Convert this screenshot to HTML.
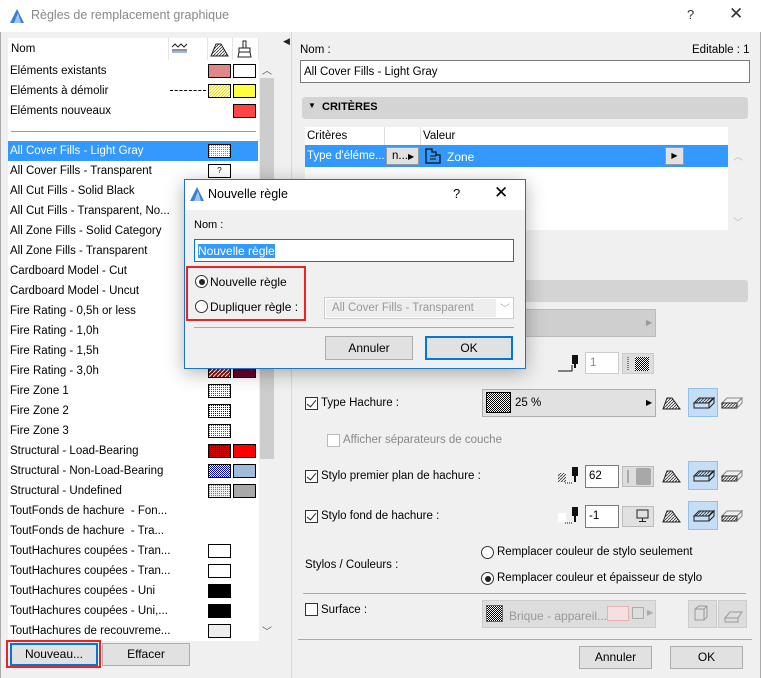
<!DOCTYPE html>
<html><head><meta charset="utf-8">
<style>
*{box-sizing:border-box;margin:0;padding:0}
body{width:761px;height:678px;overflow:hidden;background:#f0f0f0;font-family:"Liberation Sans",sans-serif;font-size:11.5px;color:#000;position:relative}
.a{position:absolute;white-space:nowrap}
.btn{position:absolute;background:#e1e1e1;border:1px solid #adadad;text-align:center;font-size:12px}
.sw{position:absolute;width:23px;height:14px;border:1px solid #000}
.row{position:absolute;left:10px;height:20px;line-height:20px}
.cb{position:absolute;width:13px;height:13px;border:1px solid #333;background:#fff}
.cb.c::after{content:"";position:absolute;left:3px;top:0px;width:4px;height:8px;border:solid #222;border-width:0 1.3px 1.3px 0;transform:rotate(40deg)}
.rad{position:absolute;width:13px;height:13px;border:1px solid #333;border-radius:50%;background:#fff}
.rad.c::after{content:"";position:absolute;left:2.5px;top:2.5px;width:6px;height:6px;border-radius:50%;background:#222}
.inp{position:absolute;background:#fff;border:1px solid #7a7a7a}
</style></head><body>
<svg width="0" height="0" style="position:absolute">
<defs>
<pattern id="dots" width="2" height="2" patternUnits="userSpaceOnUse"><rect width="2" height="2" fill="#fff"/><rect width="1" height="1" fill="#888"/></pattern>
<pattern id="dk" width="2" height="2" patternUnits="userSpaceOnUse"><rect width="2" height="2" fill="#fff"/><rect width="1" height="1" fill="#000"/><rect x="1" y="1" width="1" height="1" fill="#000"/></pattern>
<pattern id="yl" width="3" height="3" patternUnits="userSpaceOnUse"><rect width="3" height="3" fill="#ffffd0"/><path d="M0 3L3 0" stroke="#e0d000" stroke-width=".8"/></pattern>
<pattern id="rd" width="4" height="4" patternUnits="userSpaceOnUse"><rect width="4" height="4" fill="#8a1010"/><path d="M0 4L4 0" stroke="#fff" stroke-width="1"/></pattern>
<pattern id="rdot" width="2" height="2" patternUnits="userSpaceOnUse"><rect width="2" height="2" fill="#fff"/><rect width="1" height="1" fill="#e00"/></pattern>
<pattern id="bdot" width="2" height="2" patternUnits="userSpaceOnUse"><rect width="2" height="2" fill="#fff"/><rect width="1" height="1" fill="#00f"/></pattern>
<pattern id="gdot" width="2" height="2" patternUnits="userSpaceOnUse"><rect width="2" height="2" fill="#fff"/><rect width="1" height="1" fill="#080"/></pattern>
<pattern id="rdd" width="2" height="2" patternUnits="userSpaceOnUse"><rect width="2" height="2" fill="#c00"/><rect width="1" height="1" fill="#600"/></pattern>
<pattern id="bdd" width="2" height="2" patternUnits="userSpaceOnUse"><rect width="2" height="2" fill="#fff"/><rect width="1" height="1" fill="#00c"/><rect x="1" y="1" width="1" height="1" fill="#00c"/></pattern>
<pattern id="gy" width="2" height="2" patternUnits="userSpaceOnUse"><rect width="2" height="2" fill="#eee"/><rect width="1" height="1" fill="#777"/></pattern>
<pattern id="hat" width="3" height="3" patternUnits="userSpaceOnUse"><path d="M0 3L3 0" stroke="#333" stroke-width=".8"/></pattern>
</defs></svg>

<!-- title bar -->
<div class="a" style="left:0;top:0;width:761px;height:32px;background:#fff"></div>
<svg class="a" style="left:9px;top:8px" width="16" height="16"><path d="M1 15L8 1L15 15Z" fill="#3b7fd8"/><path d="M5 15L9 5L12 15Z" fill="#9cc7f5"/></svg>
<div class="a" style="left:31px;top:8px;font-size:12.5px;color:#888">Règles de remplacement graphique</div>
<div class="a" style="left:687px;top:7px;font-size:13px;color:#333">?</div>
<div class="a" style="left:729px;top:4px;font-size:17px;color:#333">✕</div>
<div class="a" style="left:0;top:32px;width:1px;height:646px;background:#aaa"></div>
<div class="a" style="left:760px;top:32px;width:1px;height:646px;background:#aaa"></div>

<!-- left list -->
<div class="a" style="left:8px;top:38px;width:251px;height:603px;background:#fff"></div>
<div class="a" style="left:168px;top:38px;width:1px;height:22px;background:#e5e5e5"></div>
<div class="a" style="left:207px;top:38px;width:1px;height:22px;background:#e5e5e5"></div>
<div class="a" style="left:232px;top:38px;width:1px;height:22px;background:#e5e5e5"></div>
<div class="a" style="left:258px;top:38px;width:1px;height:22px;background:#e5e5e5"></div>
<div class="a" style="left:11px;top:43px">Nom</div>
<svg class="a" style="left:171px;top:42px" width="18" height="12"><path d="M1 5L4 2L7 5L10 2L13 5L16 2" stroke="#222" fill="none"/><path d="M1 8H16" stroke="#222"/><path d="M1 10H16" stroke="#3a6fd0"/></svg>
<svg class="a" style="left:210px;top:41px" width="20" height="16"><path d="M1 15L6 3H11L18 15Z" fill="url(#hat)" stroke="#222"/></svg>
<svg class="a" style="left:235px;top:40px" width="20" height="18"><rect x="8" y="1" width="3" height="7" fill="none" stroke="#222"/><path d="M4 8H15V12H4Z M4 12L3 17H16L15 12" fill="none" stroke="#222"/></svg>

<div class="row" style="top:61px">Eléments existants</div>
<div class="sw" style="left:208px;top:64px;background:#e08888"></div><div class="sw" style="left:233px;top:64px;background:#fff"></div>
<div class="row" style="top:81px">Eléments à démolir</div>
<div class="a" style="left:170px;top:90px;width:36px;border-top:1px dashed #000"></div>
<div class="sw" style="left:208px;top:84px"><svg width="21" height="12"><rect width="21" height="12" fill="url(#yl)"/></svg></div><div class="sw" style="left:233px;top:84px;background:#ffff40"></div>
<div class="row" style="top:101px">Eléments nouveaux</div>
<div class="sw" style="left:233px;top:104px;background:#f44"></div>
<div class="a" style="left:11px;top:131px;width:245px;height:1px;background:#999"></div>

<div class="a" style="left:8px;top:141px;width:250px;height:20px;background:#3399ff"></div>
<div class="row" style="top:141px;color:#fff">All Cover Fills - Light Gray</div>
<div class="sw" style="left:208px;top:144px"><svg width="21" height="12"><rect width="21" height="12" fill="url(#dots)"/></svg></div>
<div class="row" style="top:161px">All Cover Fills - Transparent</div>
<div class="sw" style="left:208px;top:164px;background:#fff;font-size:8px;text-align:center;line-height:12px">?</div>
<div class="row" style="top:181px">All Cut Fills - Solid Black</div>
<div class="row" style="top:201px">All Cut Fills - Transparent, No...</div>
<div class="row" style="top:221px">All Zone Fills - Solid Category</div>
<div class="row" style="top:241px">All Zone Fills - Transparent</div>
<div class="row" style="top:261px">Cardboard Model - Cut</div>
<div class="row" style="top:281px">Cardboard Model - Uncut</div>
<div class="row" style="top:301px">Fire Rating - 0,5h or less</div>
<div class="row" style="top:321px">Fire Rating - 1,0h</div>
<div class="row" style="top:341px">Fire Rating - 1,5h</div>
<div class="row" style="top:361px">Fire Rating - 3,0h</div>
<div class="sw" style="left:208px;top:364px"><svg width="21" height="12"><rect width="21" height="12" fill="url(#rd)"/></svg></div><div class="sw" style="left:233px;top:364px;background:#6a0030"></div>
<div class="row" style="top:381px">Fire Zone 1</div>
<div class="sw" style="left:208px;top:384px"><svg width="21" height="12"><rect width="21" height="12" fill="url(#rdot)"/></svg></div>
<div class="row" style="top:401px">Fire Zone 2</div>
<div class="sw" style="left:208px;top:404px"><svg width="21" height="12"><rect width="21" height="12" fill="url(#bdot)"/></svg></div>
<div class="row" style="top:421px">Fire Zone 3</div>
<div class="sw" style="left:208px;top:424px"><svg width="21" height="12"><rect width="21" height="12" fill="url(#gdot)"/></svg></div>
<div class="row" style="top:441px">Structural - Load-Bearing</div>
<div class="sw" style="left:208px;top:444px"><svg width="21" height="12"><rect width="21" height="12" fill="url(#rdd)"/></svg></div><div class="sw" style="left:233px;top:444px;background:#f00"></div>
<div class="row" style="top:461px">Structural - Non-Load-Bearing</div>
<div class="sw" style="left:208px;top:464px"><svg width="21" height="12"><rect width="21" height="12" fill="url(#bdd)"/></svg></div><div class="sw" style="left:233px;top:464px;background:#a0bcdc"></div>
<div class="row" style="top:481px">Structural - Undefined</div>
<div class="sw" style="left:208px;top:484px"><svg width="21" height="12"><rect width="21" height="12" fill="url(#gy)"/></svg></div><div class="sw" style="left:233px;top:484px;background:#a8a8a8"></div>
<div class="row" style="top:501px">ToutFonds de hachure&nbsp; - Fon...</div>
<div class="row" style="top:521px">ToutFonds de hachure&nbsp; - Tra...</div>
<div class="row" style="top:541px">ToutHachures coupées - Tran...</div>
<div class="sw" style="left:208px;top:544px;background:#fff"></div>
<div class="row" style="top:561px">ToutHachures coupées - Tran...</div>
<div class="sw" style="left:208px;top:564px;background:#fff"></div>
<div class="row" style="top:581px">ToutHachures coupées - Uni</div>
<div class="sw" style="left:208px;top:584px;background:#000"></div>
<div class="row" style="top:601px">ToutHachures coupées - Uni,...</div>
<div class="sw" style="left:208px;top:604px;background:#000"></div>
<div class="row" style="top:621px">ToutHachures de recouvreme...</div>
<div class="sw" style="left:208px;top:624px;background:#eee"></div>

<!-- scrollbar -->
<div class="a" style="left:259px;top:60px;width:16px;height:581px;background:#f0f0f0"></div>
<div class="a" style="left:260px;top:78px;width:14px;height:381px;background:#cdcdcd"></div>
<div class="a" style="left:262px;top:62px;font-size:10px;color:#555">︿</div>
<div class="a" style="left:262px;top:623px;font-size:10px;color:#555">﹀</div>
<div class="a" style="left:283px;top:36px;font-size:9px;color:#222">◀</div>
<div class="a" style="left:291px;top:32px;width:1px;height:646px;background:#d8d8d8"></div>

<div class="a" style="left:6px;top:640px;width:95px;height:28px;border:2px solid #e22"></div>
<div class="btn" style="left:10px;top:643px;width:88px;height:23px;border:2px solid #0078d7;line-height:19px">Nouveau...</div>
<div class="btn" style="left:102px;top:643px;width:88px;height:23px;line-height:21px">Effacer</div>

<!-- right panel -->
<div class="a" style="left:300px;top:44px">Nom :</div>
<div class="a" style="left:692px;top:44px">Editable : 1</div>
<div class="inp" style="left:300px;top:60px;width:450px;height:23px"></div>
<div class="a" style="left:304px;top:66px">All Cover Fills - Light Gray</div>
<div class="a" style="left:302px;top:97px;width:446px;height:22px;background:#d4d4d4;border-radius:3px"></div>
<div class="a" style="left:308px;top:101px;font-size:8px">▼</div>
<div class="a" style="left:322px;top:101px;font-weight:bold;font-size:11px">CRITÈRES</div>
<div class="a" style="left:305px;top:127px;width:423px;height:103px;background:#fff"></div>
<div class="a" style="left:384px;top:127px;width:1px;height:18px;background:#ddd"></div>
<div class="a" style="left:420px;top:127px;width:1px;height:18px;background:#ddd"></div>
<div class="a" style="left:307px;top:130px">Critères</div>
<div class="a" style="left:423px;top:130px">Valeur</div>
<div class="a" style="left:305px;top:145px;width:423px;height:22px;background:#3399ff"></div>
<div class="a" style="left:307px;top:150px;color:#fff">Type d'éléme...</div>
<div class="a" style="left:386px;top:147px;width:33px;height:18px;background:#e1e1e1;border:1px solid #999;padding-left:5px;line-height:16px">n...<span style="font-size:8px">▶</span></div>
<svg class="a" style="left:424px;top:147px" width="18" height="18"><path d="M2 2H8V5H12V8H16V16H2Z" fill="none" stroke="#111" stroke-width="1.3"/><path d="M6 9H12M6 12H12" stroke="#111"/></svg>
<div class="a" style="left:447px;top:150px;color:#fff;font-size:12px">Zone</div>
<div class="a" style="left:665px;top:147px;width:19px;height:18px;background:#e1e1e1;border:1px solid #999;font-size:8px;text-align:center;line-height:16px">▶</div>
<div class="a" style="left:733px;top:148px;font-size:10px;color:#bbb">︿</div>
<div class="a" style="left:733px;top:214px;font-size:10px;color:#bbb">﹀</div>
<div class="a" style="left:302px;top:280px;width:446px;height:22px;background:#d4d4d4;border-radius:3px"></div>
<div class="a" style="left:482px;top:309px;width:174px;height:28px;background:#cfcfcf;border:1px solid #bbb"></div>
<div class="a" style="left:646px;top:318px;font-size:8px;color:#999">▶</div>

<!-- row with "1" -->
<svg class="a" style="left:558px;top:353px" width="24" height="20"><path d="M0 18H14V12" stroke="#111" fill="none"/><rect x="14" y="2" width="6" height="9" fill="#111"/><path d="M16 11V15H18V11" fill="#111"/></svg>
<div class="inp" style="left:585px;top:352px;width:34px;height:22px;border-color:#ccc"></div>
<div class="a" style="left:590px;top:357px;color:#888">1</div>
<div class="a" style="left:622px;top:353px;width:32px;height:21px;background:#ddd;border:1px solid #ccc"></div>
<svg class="a" style="left:626px;top:355px" width="26" height="18"><path d="M2 2V16" stroke="#222" stroke-dasharray="1 1"/><rect x="9" y="2" width="14" height="14" fill="url(#dk)"/></svg>

<!-- Type Hachure -->
<div class="cb c" style="left:305px;top:397px"></div>
<div class="a" style="left:321px;top:397px">Type Hachure :</div>
<div class="a" style="left:482px;top:389px;width:174px;height:28px;background:#e1e1e1;border:1px solid #adadad"></div>
<svg class="a" style="left:486px;top:392px" width="26" height="22"><rect x=".5" y=".5" width="24" height="20" fill="url(#dk)" stroke="#000"/></svg>
<div class="a" style="left:515px;top:397px">25 %</div>
<div class="a" style="left:646px;top:398px;font-size:8px">▶</div>

<!-- icon triplets -->
<svg class="a" style="left:662px;top:395px" width="20" height="16"><path d="M1 14L5 3H10L18 14Z" fill="url(#hat)" stroke="#222"/></svg>
<div class="a" style="left:688px;top:388px;width:30px;height:29px;background:#c5def5;border:1px solid #8ec1ee"></div>
<svg class="a" style="left:692px;top:395px" width="24" height="16"><path d="M2 8L7 3H22L17 8Z" fill="url(#hat)" stroke="#222"/><path d="M2 8H17V13H2Z M17 8L22 3V8L17 13" fill="none" stroke="#222"/></svg>
<svg class="a" style="left:720px;top:395px" width="24" height="16"><path d="M2 8L7 3H22L17 8Z" fill="none" stroke="#888"/><path d="M2 8H17V13H2Z" fill="url(#hat)" stroke="#222"/><path d="M17 8L22 3V8L17 13" fill="none" stroke="#888"/></svg>

<div class="cb" style="left:327px;top:434px;border-color:#bbb"></div>
<div class="a" style="left:343px;top:434px;color:#888">Afficher séparateurs de couche</div>

<!-- Stylo premier plan -->
<div class="cb c" style="left:305px;top:470px"></div>
<div class="a" style="left:321px;top:470px">Stylo premier plan de hachure :</div>
<svg class="a" style="left:557px;top:465px" width="26" height="22"><rect x="1" y="8" width="8" height="9" fill="url(#hat)"/><path d="M8 18H16" stroke="#111" stroke-dasharray="1 1"/><rect x="15" y="2" width="6" height="9" fill="#111"/><path d="M17 11V17H19V11" fill="#111"/></svg>
<div class="inp" style="left:585px;top:465px;width:34px;height:23px"></div>
<div class="a" style="left:589px;top:470px">62</div>
<div class="a" style="left:622px;top:466px;width:32px;height:21px;background:#ddd;border:1px solid #bbb"></div>
<div class="a" style="left:627px;top:470px;width:2px;height:13px;background:#aaa"></div>
<div class="a" style="left:636px;top:468px;width:15px;height:17px;background:#a8a8a8;border-radius:2px"></div>
<svg class="a" style="left:662px;top:468px" width="20" height="16"><path d="M1 14L5 3H10L18 14Z" fill="url(#hat)" stroke="#222"/></svg>
<div class="a" style="left:688px;top:461px;width:30px;height:29px;background:#c5def5;border:1px solid #8ec1ee"></div>
<svg class="a" style="left:692px;top:468px" width="24" height="16"><path d="M2 8L7 3H22L17 8Z" fill="url(#hat)" stroke="#222"/><path d="M2 8H17V13H2Z M17 8L22 3V8L17 13" fill="none" stroke="#222"/></svg>
<svg class="a" style="left:720px;top:468px" width="24" height="16"><path d="M2 8L7 3H22L17 8Z" fill="none" stroke="#888"/><path d="M2 8H17V13H2Z" fill="url(#hat)" stroke="#222"/><path d="M17 8L22 3V8L17 13" fill="none" stroke="#888"/></svg>

<!-- Stylo fond -->
<div class="cb c" style="left:305px;top:510px"></div>
<div class="a" style="left:321px;top:510px">Stylo fond de hachure :</div>
<svg class="a" style="left:557px;top:505px" width="26" height="22"><rect x="1" y="8" width="8" height="9" fill="#fff"/><path d="M8 18H16" stroke="#111" stroke-dasharray="1 1"/><rect x="15" y="2" width="6" height="9" fill="#111"/><path d="M17 11V17H19V11" fill="#111"/></svg>
<div class="inp" style="left:585px;top:505px;width:34px;height:23px"></div>
<div class="a" style="left:589px;top:510px">-1</div>
<div class="a" style="left:622px;top:506px;width:32px;height:21px;background:#e1e1e1;border:1px solid #bbb"></div>
<svg class="a" style="left:636px;top:509px" width="14" height="14"><rect x="1" y="1" width="11" height="8" fill="none" stroke="#222"/><path d="M6.5 9V12M3 12.5H10" stroke="#222"/></svg>
<svg class="a" style="left:662px;top:508px" width="20" height="16"><path d="M1 14L5 3H10L18 14Z" fill="url(#hat)" stroke="#222"/></svg>
<div class="a" style="left:688px;top:501px;width:30px;height:29px;background:#c5def5;border:1px solid #8ec1ee"></div>
<svg class="a" style="left:692px;top:508px" width="24" height="16"><path d="M2 8L7 3H22L17 8Z" fill="url(#hat)" stroke="#222"/><path d="M2 8H17V13H2Z M17 8L22 3V8L17 13" fill="none" stroke="#222"/></svg>
<svg class="a" style="left:720px;top:508px" width="24" height="16"><path d="M2 8L7 3H22L17 8Z" fill="none" stroke="#888"/><path d="M2 8H17V13H2Z" fill="url(#hat)" stroke="#222"/><path d="M17 8L22 3V8L17 13" fill="none" stroke="#888"/></svg>

<div class="a" style="left:305px;top:559px">Stylos / Couleurs :</div>
<div class="rad" style="left:481px;top:546px"></div>
<div class="a" style="left:497px;top:546px">Remplacer couleur de stylo seulement</div>
<div class="rad c" style="left:481px;top:572px"></div>
<div class="a" style="left:497px;top:572px">Remplacer couleur et épaisseur de stylo</div>
<div class="a" style="left:303px;top:593px;width:443px;height:1px;background:#aaa"></div>
<div class="cb" style="left:305px;top:603px"></div>
<div class="a" style="left:321px;top:604px">Surface :</div>
<div class="a" style="left:482px;top:600px;width:174px;height:28px;background:#ddd;border:1px solid #ccc"></div>
<svg class="a" style="left:486px;top:605px" width="18" height="18"><rect x=".5" y=".5" width="16" height="16" fill="url(#dk)" stroke="#666"/></svg>
<div class="a" style="left:509px;top:609px;color:#999;font-size:12px">Brique - appareil...</div>
<div class="a" style="left:607px;top:606px;width:22px;height:15px;background:#f4e0e0;border:1px solid #e8b0b0"></div>
<div class="a" style="left:632px;top:607px;width:12px;height:12px;border:1px solid #aaa"></div>
<div class="a" style="left:647px;top:608px;font-size:8px;color:#aaa">▶</div>
<div class="a" style="left:688px;top:600px;width:29px;height:28px;background:#ddd;border:1px solid #ccc"></div>
<div class="a" style="left:718px;top:600px;width:29px;height:28px;background:#ddd;border:1px solid #ccc"></div>
<svg class="a" style="left:692px;top:604px" width="22" height="20"><path d="M3 5L7 2H15V13L12 16H3Z M3 5H12V16 M12 5L15 2" fill="none" stroke="#999"/></svg>
<svg class="a" style="left:722px;top:606px" width="22" height="18"><path d="M3 12L8 6H20L16 12Z M3 12H16V16H3Z" fill="none" stroke="#999"/></svg>
<div class="a" style="left:298px;top:639px;width:454px;height:1px;background:#aaa"></div>
<div class="btn" style="left:579px;top:646px;width:73px;height:23px;line-height:21px">Annuler</div>
<div class="btn" style="left:670px;top:646px;width:73px;height:23px;line-height:21px">OK</div>

<!-- dialog -->
<div class="a" style="left:184px;top:179px;width:342px;height:190px;background:#f0f0f0;border:1px solid #1b74c9;box-shadow:0 4px 18px rgba(0,0,0,.3)"></div>
<div class="a" style="left:185px;top:180px;width:340px;height:30px;background:#fff"></div>
<svg class="a" style="left:189px;top:186px" width="16" height="16"><path d="M1 15L8 1L15 15Z" fill="#3b7fd8"/><path d="M5 15L9 5L12 15Z" fill="#9cc7f5"/></svg>
<div class="a" style="left:208px;top:187px;font-size:12.5px">Nouvelle règle</div>
<div class="a" style="left:453px;top:186px;font-size:13px">?</div>
<div class="a" style="left:494px;top:183px;font-size:17px">✕</div>
<div class="a" style="left:194px;top:219px;font-size:11px">Nom :</div>
<div class="inp" style="left:194px;top:239px;width:320px;height:23px;border-color:#0078d7"></div>
<div class="a" style="left:198px;top:244px;background:#3399ff;color:#fff;font-size:12px;line-height:14px">Nouvelle règle</div>
<div class="a" style="left:186px;top:266px;width:120px;height:55px;border:2px solid #e22"></div>
<div class="rad c" style="left:195px;top:275px"></div>
<div class="a" style="left:210px;top:275px;font-size:12px">Nouvelle règle</div>
<div class="rad" style="left:195px;top:300px"></div>
<div class="a" style="left:210px;top:300px;font-size:12px">Dupliquer règle :</div>
<div class="a" style="left:324px;top:297px;width:190px;height:22px;background:#fff;border:1px solid #ccc"></div>
<div class="a" style="left:326px;top:299px;width:170px;height:18px;background:#eee"></div>
<div class="a" style="left:332px;top:302px;color:#999">All Cover Fills - Transparent</div>
<div class="a" style="left:500px;top:300px;font-size:10px;color:#aaa">﹀</div>
<div class="a" style="left:194px;top:327px;width:320px;height:1px;background:#aaa"></div>
<div class="btn" style="left:325px;top:336px;width:88px;height:24px;line-height:22px">Annuler</div>
<div class="btn" style="left:425px;top:336px;width:88px;height:24px;line-height:20px;border:2px solid #0078d7">OK</div>
</body></html>
